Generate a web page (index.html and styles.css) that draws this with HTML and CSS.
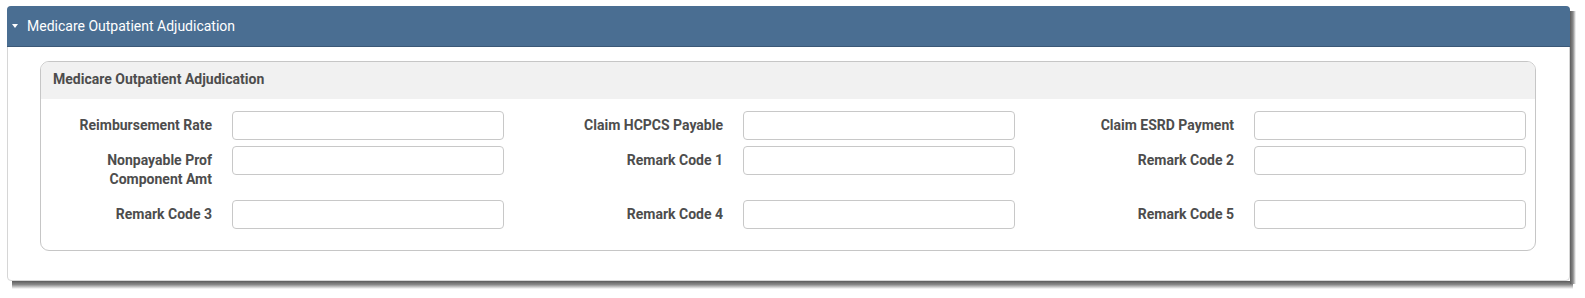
FILE: index.html
```html
<!DOCTYPE html>
<html lang="en">

<head>
    <meta charset="UTF-8">
    <title>Medicare Outpatient Adjudication</title>
    <link rel="stylesheet" href="styles.css">
</head>

<body>

    <div class="frame">
        <div class="panel">
            <div class="panel-head">
                <span class="caret"></span>
                Medicare Outpatient Adjudication
            </div>
            <div class="panel-body">
                <div class="group">
                    <div class="group-head">Medicare Outpatient Adjudication</div>
                    <div class="fields">
                        <div class="field"><label>Reimbursement Rate</label><input type="text" /></div>
                        <div class="field"><label>Claim HCPCS Payable</label><input type="text" /></div>
                        <div class="field"><label>Claim ESRD Payment</label><input type="text" /></div>
                        <div class="field"><label>Nonpayable Prof Component Amt</label><input type="text" /></div>
                        <div class="field"><label>Remark Code 1</label><input type="text" /></div>
                        <div class="field"><label>Remark Code 2</label><input type="text" /></div>
                        <div class="field"><label>Remark Code 3</label><input type="text" /></div>
                        <div class="field"><label>Remark Code 4</label><input type="text" /></div>
                        <div class="field"><label>Remark Code 5</label><input type="text" /></div>
                    </div>
                </div>
            </div>
        </div>
    </div>

</body>

</html>
```

FILE: styles.css
```css
body {
    margin: 6px 9px 4px 7px;
    background: #fff;
    font-family: Roboto, Arial, Helvetica, sans-serif;
}

/* the screenshot's drop shadow, drawn as two gradient strips */
.frame {
    padding: 0 6px 8px 0;
    background-image:
        linear-gradient(to right, #5c5c5c, #8a8a8a 50%, rgba(255, 255, 255, 0)),
        linear-gradient(to bottom, #5c5c5c, #8a8a8a 45%, rgba(255, 255, 255, 0));
    background-repeat: no-repeat;
    background-position: right 0 top 5px, left 5px bottom 0;
    background-size: 6px calc(100% - 10px), calc(100% - 8px) 8px;
}

.panel {
    border: 1px solid #d6d6d6;
    border-radius: 4px;
    background: #fff;
}

.panel-head {
    display: flex;
    align-items: center;
    height: 40px;
    margin: -1px -1px 0 -1px;
    padding-left: 5px;
    background: #4a6e92;
    border-bottom: 1px solid #3b5877;
    border-radius: 4px 4px 0 0;
    color: #fff;
    font-size: 14px;
}

.caret {
    display: inline-block;
    width: 0;
    height: 0;
    margin-right: 9px;
    border-left: 3px solid transparent;
    border-right: 3px solid transparent;
    border-top: 4px solid #fff;
}

.panel-body {
    padding: 14px 33px 29px 32px;
}

.group {
    border: 1px solid #c6c6c6;
    border-radius: 9px;
    overflow: hidden;
}

.group-head {
    height: 37px;
    line-height: 35px;
    padding-left: 12px;
    background: #f1f1f1;
    color: #4d4d4d;
    font-size: 14px;
    font-weight: bold;
}

.fields {
    display: grid;
    grid-template-columns: repeat(3, 442px);
    column-gap: 69px;
    row-gap: 6px;
    padding: 12px 0 21px 21px;
}

.field {
    display: flex;
    align-items: flex-start;
    gap: 20px;
}

.field label {
    width: 150px;
    padding: 5px 0;
    text-align: right;
    color: #4d4d4d;
    font-size: 14px;
    font-weight: bold;
    line-height: 19px;
}

.field input {
    box-sizing: border-box;
    width: 272px;
    height: 29px;
    margin: 0;
    border: 1px solid #c8c8c8;
    border-radius: 4px;
    font-family: Roboto, Arial, sans-serif;
}
```
